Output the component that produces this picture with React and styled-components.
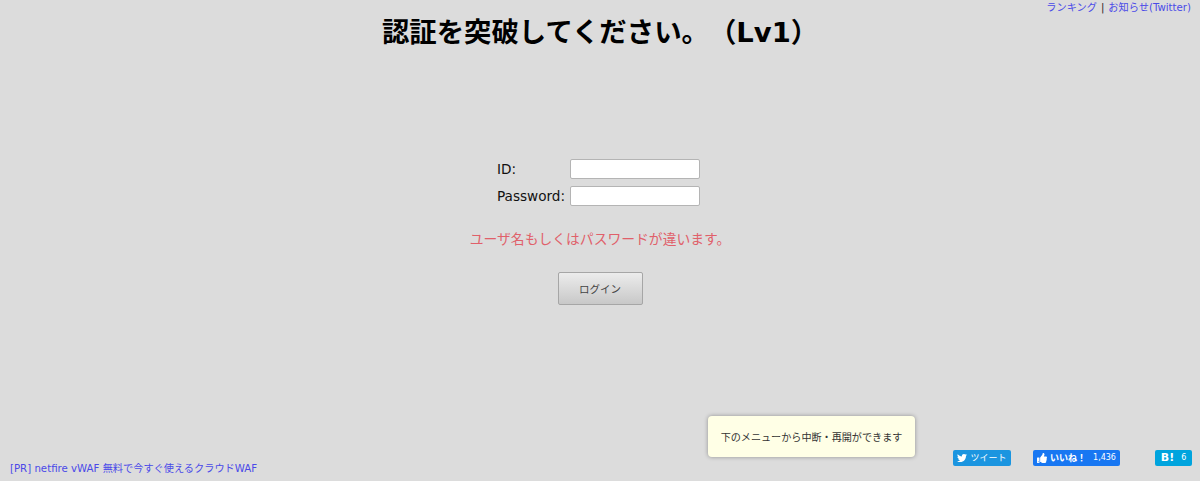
import styled, { createGlobalStyle } from 'styled-components';
import { FaTwitter, FaThumbsUp } from 'react-icons/fa';

const GlobalStyle = createGlobalStyle`
  html, body {
    margin: 0;
    padding: 0;
    height: 100%;
    overflow: hidden;
    background: #dcdcdc;
  }
  #root {
    height: 100%;
  }
`;

const fontStack = `"DejaVu Sans", "Noto Sans CJK JP", sans-serif`;

const Page = styled.div`
  position: relative;
  height: 481px;
  display: flex;
  flex-direction: column;
  font-family: ${fontStack};
  color: #111;
  text-spacing-trim: space-all;
`;

const TopLinks = styled.div`
  display: flex;
  justify-content: flex-end;
  height: 16px;
  padding-right: 9px;
  font-size: 10.2px;
  line-height: 15px;
  color: #222;
  gap: 4px;
`;

const Link = styled.a`
  color: #4a4ae8;
  text-decoration: none;
`;

const Title = styled.h1`
  margin: 0;
  height: 34px;
  font-size: 27.4px;
  line-height: 34px;
  font-weight: 700;
  color: #000;
  text-align: center;
`;

const LoginForm = styled.form`
  display: flex;
  flex-direction: column;
  align-items: center;
  margin-top: 109px;
`;

const FieldGrid = styled.div`
  display: grid;
  grid-template-columns: 73px 130px;
  row-gap: 7px;
  margin-right: 3px;
`;

const FieldLabel = styled.label`
  font-size: 13.6px;
  line-height: 20px;
  color: #111;
`;

const TextInput = styled.input`
  box-sizing: border-box;
  width: 130px;
  height: 20px;
  padding: 0 4px;
  background: #fff;
  border: 1px solid #b4b4b4;
  border-radius: 2px;
  outline: none;
`;

const ErrorText = styled.p`
  margin: 23px 0 0;
  font-size: 13.8px;
  line-height: 20px;
  color: #e0606a;
`;

const LoginButton = styled.button`
  box-sizing: border-box;
  width: 85px;
  height: 33px;
  margin-top: 23px;
  background: linear-gradient(#ececec, #c8c8c8);
  border: 1px solid #a6a6a6;
  border-radius: 2px;
  font-family: ${fontStack};
  font-size: 10.5px;
  color: #444;
`;

const BottomBar = styled.div`
  display: flex;
  align-items: flex-start;
  margin-top: auto;
  height: 31px;
  padding: 0 8px 0 10px;
`;

const PrLink = styled(Link)`
  align-self: flex-end;
  margin-bottom: 6px;
  font-size: 10.2px;
  line-height: 13px;
`;

const Share = styled.div`
  display: flex;
  margin-left: auto;
`;

const ShareButton = styled.a`
  display: flex;
  align-items: center;
  justify-content: center;
  gap: 3px;
  box-sizing: border-box;
  width: ${props => props.$width}px;
  height: 16px;
  margin-left: ${props => props.$gap || 0}px;
  background: ${props => props.$bg};
  border-radius: 2px;
  color: #fff;
  font-size: 9px;
  font-weight: ${props => (props.$bold ? 700 : 400)};
  line-height: 16px;
`;

const Count = styled.span`
  margin-left: 4px;
  font-weight: 400;
  font-size: 8px;
`;

const HatenaMark = styled.span`
  font-size: 11px;
`;

const Toast = styled.div`
  position: absolute;
  left: 708px;
  top: 416px;
  box-sizing: border-box;
  width: 207px;
  height: 41px;
  display: flex;
  align-items: center;
  justify-content: center;
  background: #ffffe6;
  border-radius: 4px;
  box-shadow: 0 0 4px rgba(0, 0, 0, 0.35);
  font-size: 10.1px;
  color: #333;
`;

export default function App() {
  return (
    <Page>
      <GlobalStyle />
      <TopLinks>
        <Link href="#">ランキング</Link>
        <span>|</span>
        <Link href="#">お知らせ(Twitter)</Link>
      </TopLinks>
      <Title>認証を突破してください。（Lv1）</Title>
      <LoginForm onSubmit={e => e.preventDefault()}>
        <FieldGrid>
          <FieldLabel htmlFor="id">ID:</FieldLabel>
          <TextInput id="id" type="text" />
          <FieldLabel htmlFor="password">Password:</FieldLabel>
          <TextInput id="password" type="password" />
        </FieldGrid>
        <ErrorText>ユーザ名もしくはパスワードが違います。</ErrorText>
        <LoginButton type="submit">ログイン</LoginButton>
      </LoginForm>
      <BottomBar>
        <PrLink href="#">[PR] netfire vWAF 無料で今すぐ使えるクラウドWAF</PrLink>
        <Share>
          <ShareButton $width={58} $bg="#1b95e0">
            <FaTwitter size={10} />
            ツイート
          </ShareButton>
          <ShareButton $width={87} $gap={22} $bg="#1877f2" $bold>
            <FaThumbsUp size={10} />
            いいね！
            <Count>1,436</Count>
          </ShareButton>
          <ShareButton $width={37} $gap={35} $bg="#00a4de" $bold>
            <HatenaMark>B!</HatenaMark>
            <Count>6</Count>
          </ShareButton>
        </Share>
      </BottomBar>
      <Toast>下のメニューから中断・再開ができます</Toast>
    </Page>
  );
}
